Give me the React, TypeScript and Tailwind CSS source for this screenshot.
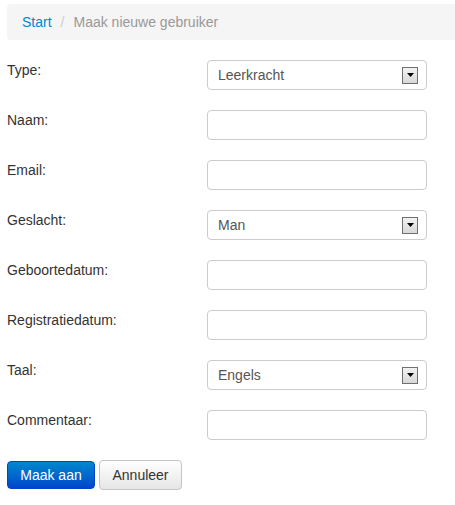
const fields: { label: string; type: "select" | "input"; value?: string }[] = [
  { label: "Type:", type: "select", value: "Leerkracht" },
  { label: "Naam:", type: "input" },
  { label: "Email:", type: "input" },
  { label: "Geslacht:", type: "select", value: "Man" },
  { label: "Geboortedatum:", type: "input" },
  { label: "Registratiedatum:", type: "input" },
  { label: "Taal:", type: "select", value: "Engels" },
  { label: "Commentaar:", type: "input" },
];

function SelectBox({ value }: { value: string }) {
  return (
    <div className="flex h-[30px] w-[220px] items-center justify-between rounded-[4px] border border-[#cccccc] bg-white pl-[10px] pr-[8px]">
      <span className="text-[14px] text-[#555555]">{value}</span>
      <span className="flex h-[17px] w-[16px] items-center justify-center border border-[#707070] bg-gradient-to-b from-[#f2f2f2] to-[#d8d8d8]">
        <svg width="7" height="4" viewBox="0 0 7 4" aria-hidden="true">
          <path d="M0 0h7L3.5 4z" fill="#000" />
        </svg>
      </span>
    </div>
  );
}

export default function App() {
  return (
    <div className="min-h-screen bg-white pl-[7px] pt-[4px] font-['Liberation_Sans',Arial,sans-serif] text-[14px] leading-[20px] text-[#333333]">
      <ul className="mb-[20px] flex h-[36px] items-center rounded-l-[4px] bg-[#f5f5f5] px-[15px]">
        <li className="text-[#0088cc]">Start</li>
        <li className="px-[9px] text-[#cccccc]">/</li>
        <li className="text-[#999999]">Maak nieuwe gebruiker</li>
      </ul>

      <form className="flex flex-col">
        {fields.map((field) => (
          <div key={field.label} className="mb-[20px] flex">
            <label className="w-[200px]">{field.label}</label>
            {field.type === "select" ? (
              <SelectBox value={field.value ?? ""} />
            ) : (
              <input className="h-[30px] w-[220px] rounded-[4px] border border-[#cccccc] bg-white px-[6px] outline-none" />
            )}
          </div>
        ))}
        <div className="flex items-center gap-[4px]">
          <button type="button" className="h-[28px] w-[88px] rounded-[4px] border border-[#0044cc] bg-gradient-to-b from-[#0088cc] to-[#0044cc] text-[14px] text-white">
            Maak aan
          </button>
          <button type="button" className="h-[30px] w-[83px] rounded-[4px] border border-[#c5c5c5] bg-gradient-to-b from-white to-[#e6e6e6] text-[14px] text-[#333333]">
            Annuleer
          </button>
        </div>
      </form>
    </div>
  );
}
